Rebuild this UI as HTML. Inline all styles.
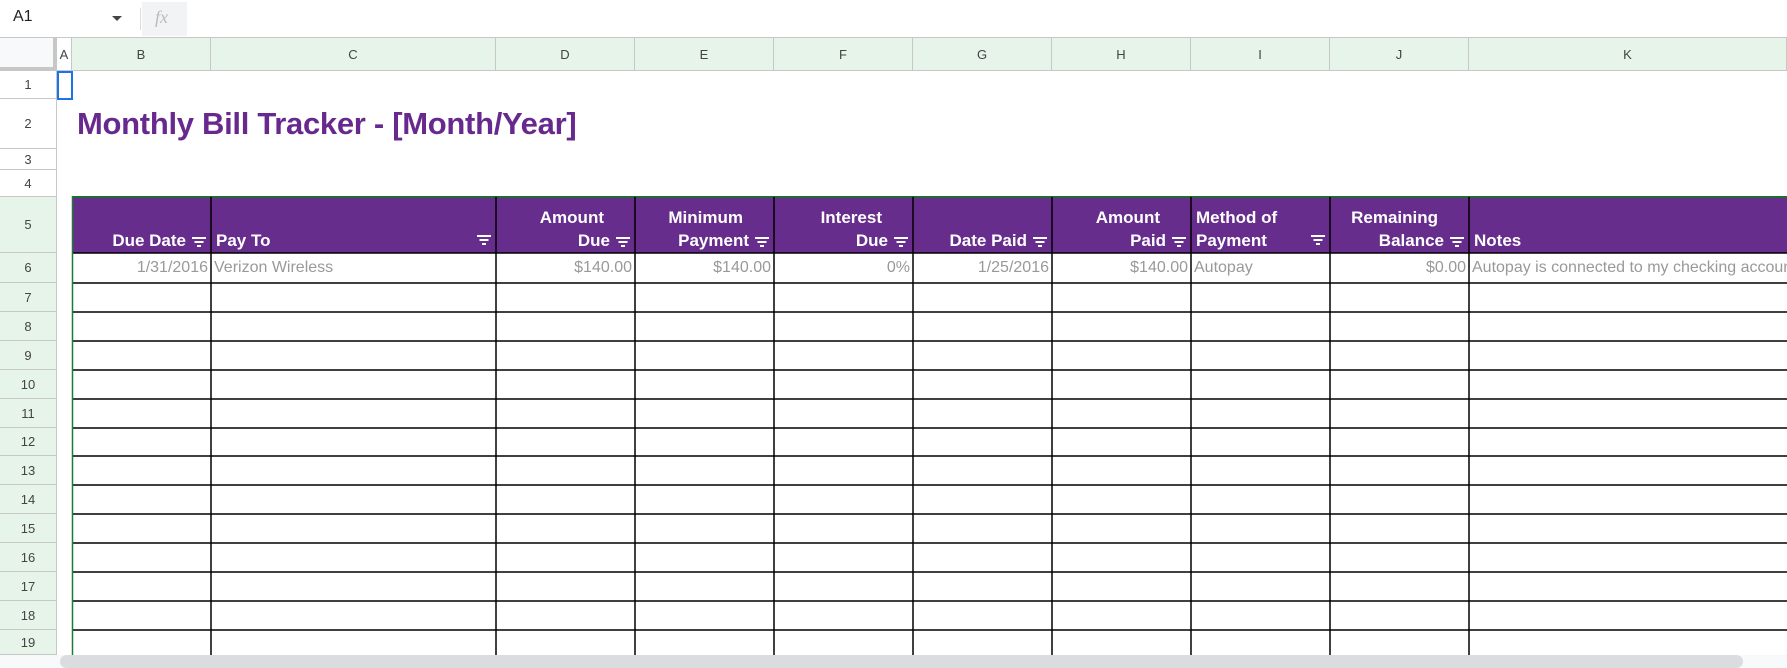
<!DOCTYPE html>
<html><head><meta charset="utf-8"><style>
*{box-sizing:border-box;margin:0;padding:0}
body{width:1787px;height:668px;overflow:hidden;background:#fff;font-family:"Liberation Sans",Arial,sans-serif;position:relative}
.a{position:absolute}
.ch{position:absolute;top:38px;height:33px;background:#e6f4ea;border-right:1px solid #c7c7c7;border-bottom:1px solid #c7c7c7;font-size:13px;color:#444;text-align:center;line-height:33px}
.rh{position:absolute;left:0;width:57px;border-right:1px solid #c7c7c7;border-bottom:1px solid #c7c7c7;font-size:13px;color:#444;text-align:center;display:flex;align-items:center;justify-content:center;background:#fff}
.rh.g{background:#e6f4ea}
.hd{position:absolute;top:197px;height:56px;color:#fff;font-weight:bold;font-size:17px;line-height:23px;padding:4px 5px 1px 5px;display:flex;flex-direction:column;justify-content:flex-end;text-align:right}
.hd.l{text-align:left}
.p{padding-right:26px}
.f{display:inline-block;width:14px;height:10px;margin-left:6px;vertical-align:-1px;position:relative}
.f:before,.f:after,.f i{content:"";position:absolute;height:2px;background:#fff;left:50%;transform:translateX(-50%)}
.f:before{top:0;width:14px}.f i{top:4px;width:9px}.f:after{top:8px;width:4px}
.c{position:absolute;top:253px;height:30px;font-size:16px;color:#999;line-height:30px;padding:0 3px;white-space:nowrap;overflow:hidden}
</style></head><body>
<div class="a" style="left:0;top:0;width:1787px;height:38px;background:#fff;border-bottom:1px solid #c7c7c7"></div>
<div class="a" style="left:13px;top:8px;font-size:16px;color:#222">A1</div>
<div class="a" style="left:112px;top:16px;width:0;height:0;border-left:5px solid transparent;border-right:5px solid transparent;border-top:5px solid #444"></div>
<div class="a" style="left:140px;top:8px;width:1px;height:22px;background:#ddd"></div>
<div class="a" style="left:142px;top:2px;width:45px;height:34px;background:#f1f3f4"></div>
<div class="a" style="left:155px;top:7px;font-size:18px;font-style:italic;color:#bbb;font-family:'Liberation Serif',serif">fx</div>
<div class="a" style="left:0;top:38px;width:57px;height:33px;background:#f8f9fa;border-right:4px solid #c7c7c7;border-bottom:4px solid #c7c7c7"></div>
<div class="ch" style="left:57px;width:15px;background:#fff">A</div>
<div class="ch" style="left:72px;width:139px">B</div>
<div class="ch" style="left:211px;width:285px">C</div>
<div class="ch" style="left:496px;width:139px">D</div>
<div class="ch" style="left:635px;width:139px">E</div>
<div class="ch" style="left:774px;width:139px">F</div>
<div class="ch" style="left:913px;width:139px">G</div>
<div class="ch" style="left:1052px;width:139px">H</div>
<div class="ch" style="left:1191px;width:139px">I</div>
<div class="ch" style="left:1330px;width:139px">J</div>
<div class="ch" style="left:1469px;width:318px">K</div>
<div class="rh" style="top:71px;height:28px">1</div>
<div class="rh" style="top:99px;height:50px">2</div>
<div class="rh" style="top:149px;height:21px">3</div>
<div class="rh" style="top:170px;height:27px">4</div>
<div class="rh g" style="top:197px;height:56px">5</div>
<div class="rh g" style="top:253px;height:30px">6</div>
<div class="rh g" style="top:283px;height:29px">7</div>
<div class="rh g" style="top:312px;height:29px">8</div>
<div class="rh g" style="top:341px;height:29px">9</div>
<div class="rh g" style="top:370px;height:29px">10</div>
<div class="rh g" style="top:399px;height:29px">11</div>
<div class="rh g" style="top:428px;height:28px">12</div>
<div class="rh g" style="top:456px;height:29px">13</div>
<div class="rh g" style="top:485px;height:29px">14</div>
<div class="rh g" style="top:514px;height:29px">15</div>
<div class="rh g" style="top:543px;height:29px">16</div>
<div class="rh g" style="top:572px;height:29px">17</div>
<div class="rh g" style="top:601px;height:29px">18</div>
<div class="rh g" style="top:630px;height:25px">19</div>
<div class="a" style="left:57px;top:71px;width:16px;height:29px;border:2px solid #1a73e8"></div>
<div class="a" style="left:77px;top:106px;font-size:31px;font-weight:bold;color:#68298e;letter-spacing:-0.3px">Monthly Bill Tracker - [Month/Year]</div>
<div class="a" style="left:72px;top:196px;width:1715px;height:57px;background:#662d8c;border-top:2px solid #1e6b34"></div>
<div class="hd" style="left:72px;width:139px"><div>Due Date<span class="f"><i></i></span></div></div>
<div class="hd l" style="left:211px;width:285px"><div style="display:flex;justify-content:space-between">Pay To<span class="f" style="margin-top:6px"><i></i></span></div></div>
<div class="hd" style="left:496px;width:139px"><div class="p">Amount</div><div>Due<span class="f"><i></i></span></div></div>
<div class="hd" style="left:635px;width:139px"><div class="p">Minimum</div><div>Payment<span class="f"><i></i></span></div></div>
<div class="hd" style="left:774px;width:139px"><div class="p">Interest</div><div>Due<span class="f"><i></i></span></div></div>
<div class="hd" style="left:913px;width:139px"><div>Date Paid<span class="f"><i></i></span></div></div>
<div class="hd" style="left:1052px;width:139px"><div class="p">Amount</div><div>Paid<span class="f"><i></i></span></div></div>
<div class="hd l" style="left:1191px;width:139px"><div>Method of</div><div style="display:flex;justify-content:space-between">Payment<span class="f" style="margin-top:6px"><i></i></span></div></div>
<div class="hd" style="left:1330px;width:139px"><div class="p">Remaining</div><div>Balance<span class="f"><i></i></span></div></div>
<div class="hd l" style="left:1469px;width:318px"><div>Notes</div></div>
<div class="c" style="left:72px;width:139px;text-align:right">1/31/2016</div>
<div class="c" style="left:211px;width:285px">Verizon Wireless</div>
<div class="c" style="left:496px;width:139px;text-align:right">$140.00</div>
<div class="c" style="left:635px;width:139px;text-align:right">$140.00</div>
<div class="c" style="left:774px;width:139px;text-align:right">0%</div>
<div class="c" style="left:913px;width:139px;text-align:right">1/25/2016</div>
<div class="c" style="left:1052px;width:139px;text-align:right">$140.00</div>
<div class="c" style="left:1191px;width:139px">Autopay</div>
<div class="c" style="left:1330px;width:139px;text-align:right">$0.00</div>
<div class="c" style="left:1469px;width:318px">Autopay is connected to my checking account</div>
<svg class="a" style="left:0;top:0" width="1787" height="668">
<g stroke="#000" stroke-width="1.5">
<line x1="211" y1="197" x2="211" y2="655"/><line x1="496" y1="197" x2="496" y2="655"/>
<line x1="635" y1="197" x2="635" y2="655"/><line x1="774" y1="197" x2="774" y2="655"/>
<line x1="913" y1="197" x2="913" y2="655"/><line x1="1052" y1="197" x2="1052" y2="655"/>
<line x1="1191" y1="197" x2="1191" y2="655"/><line x1="1330" y1="197" x2="1330" y2="655"/>
<line x1="1469" y1="197" x2="1469" y2="655"/>
<line x1="72" y1="253" x2="1787" y2="253"/><line x1="72" y1="283" x2="1787" y2="283"/>
<line x1="72" y1="312" x2="1787" y2="312"/><line x1="72" y1="341" x2="1787" y2="341"/>
<line x1="72" y1="370" x2="1787" y2="370"/><line x1="72" y1="399" x2="1787" y2="399"/>
<line x1="72" y1="428" x2="1787" y2="428"/><line x1="72" y1="456" x2="1787" y2="456"/>
<line x1="72" y1="485" x2="1787" y2="485"/><line x1="72" y1="514" x2="1787" y2="514"/>
<line x1="72" y1="543" x2="1787" y2="543"/><line x1="72" y1="572" x2="1787" y2="572"/>
<line x1="72" y1="601" x2="1787" y2="601"/><line x1="72" y1="630" x2="1787" y2="630"/>
</g>
<line x1="72.5" y1="196" x2="72.5" y2="655" stroke="#1e7b34" stroke-width="1.5"/>
</svg>
<div class="a" style="left:0;top:655px;width:1787px;height:13px;background:#f8f9fa"></div>
<div class="a" style="left:60px;top:655px;width:1683px;height:13px;background:#dadce0;border-radius:7px"></div>
</body></html>
